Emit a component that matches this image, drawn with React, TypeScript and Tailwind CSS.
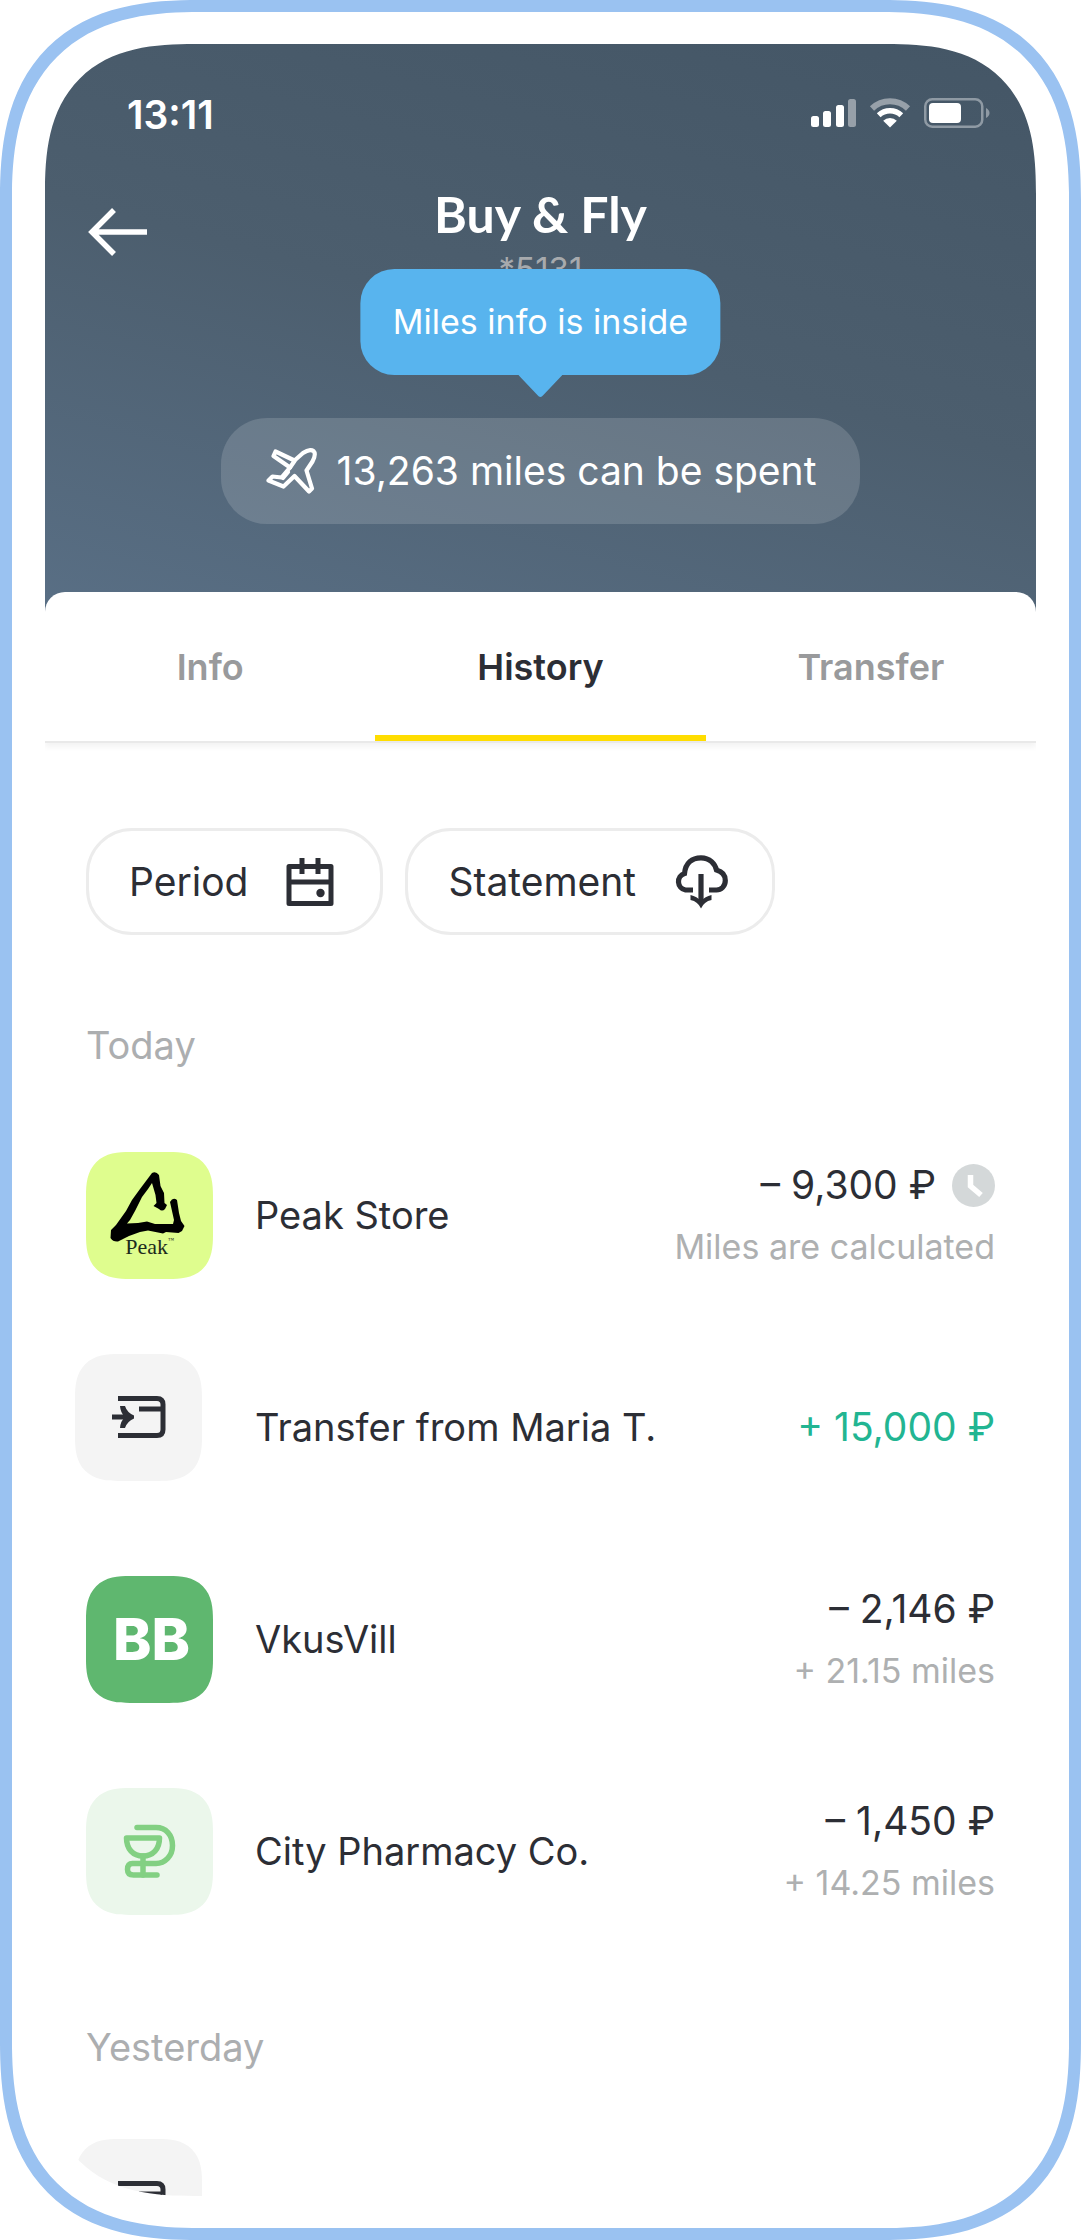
import type { ReactNode } from "react";

const squircle =
  "rounded-[30px] supports-[corner-shape:squircle]:rounded-[44px] supports-[corner-shape:squircle]:[corner-shape:superellipse(1.4)]";

function SignalIcon() {
  return (
    <svg width="45" height="30" viewBox="0 0 45 30" aria-hidden="true">
      <rect x="0" y="18" width="8" height="11" rx="2.5" fill="#fff" />
      <rect x="12" y="13" width="8" height="16" rx="2.5" fill="#fff" />
      <rect x="25" y="7" width="8" height="22" rx="2.5" fill="#fff" />
      <rect x="37" y="1" width="8" height="28" rx="2.5" fill="#97a0a9" />
    </svg>
  );
}

function WifiIcon() {
  return (
    <svg width="42" height="30" viewBox="0 0 42 30" aria-hidden="true">
      <path d="M3 10.5 A26 26 0 0 1 39 10.5" fill="none" stroke="#97a0a9" strokeWidth="6" />
      <path d="M9.7 17.2 A16.5 16.5 0 0 1 32.3 17.2" fill="none" stroke="#fff" strokeWidth="5.5" />
      <path d="M21 29.5 L14.2 22.7 A9.6 9.6 0 0 1 27.800 22.700 Z" fill="#fff" />
    </svg>
  );
}

function BatteryIcon() {
  return (
    <svg width="66" height="30" viewBox="0 0 66 30" aria-hidden="true">
      <rect x="1.25" y="1.25" width="57" height="27.5" rx="7" fill="none" stroke="#8f9aa4" strokeWidth="2.5" />
      <rect x="5" y="5" width="32" height="20" rx="4" fill="#fff" />
      <path d="M62 10 Q65.500 12 65.500 15 Q65.500 18 62 20 Z" fill="#8f9aa4" />
    </svg>
  );
}

function PlaneIcon() {
  return (
    <svg width="52" height="46" viewBox="0 0 52 46" fill="none" stroke="#fff" strokeWidth="4.2" strokeLinejoin="round" strokeLinecap="round" aria-hidden="true">
      <path d="M10.500 3.500 L29.500 12.500 L38 5 Q44.500 0.500 48.500 3 Q51.500 6 47.500 13.500 L41.500 22.500 L47 40.500 L44 43.500 L29.500 28 L18.500 38.500 L3.500 32.500 L7.500 28.500 L16.500 29.500 L25 19.500 L8.500 8 Z" />
      <path d="M25 19.500 L29.500 13" />
      <path d="M18 30 L23 24" />
    </svg>
  );
}

function CalendarIcon() {
  return (
    <svg width="48" height="48" viewBox="0 0 48 48" aria-hidden="true">
      <path d="M3 8.500 H45 V45.500 H3 Z" fill="none" stroke="#2c2e35" strokeWidth="5" strokeLinejoin="round" />
      <path d="M3 24 H45" stroke="#2c2e35" strokeWidth="5" />
      <path d="M16 0 V16 M32 0 V16" stroke="#2c2e35" strokeWidth="5" />
      <circle cx="34.5" cy="35" r="4.2" fill="#2c2e35" />
    </svg>
  );
}

function CloudDownloadIcon() {
  return (
    <svg width="54" height="54" viewBox="0 0 54 54" fill="none" stroke="#2c2e35" strokeWidth="5.2" aria-hidden="true">
      <path d="M19 35 H11.500 A8.500 8.500 0 0 1 10.500 18.500 C11.500 8 18 2.800 27 2.800 C36 2.800 41 9 42.500 15 C48 16.500 51.300 20 51.300 25.500 C51.300 31.500 47 35 42.500 35 H35" />
      <path d="M27 19 V49" />
      <path d="M16.500 40 V45 Q24 46.500 27 53.500 Q30 46.500 37.500 45 V40 Q31 41.500 27 46 Q23 41.500 16.500 40 Z" fill="#2c2e35" stroke="none" />
    </svg>
  );
}

function ClockIcon() {
  return (
    <svg width="43" height="43" viewBox="0 0 43 43" aria-label="Pending" role="img">
      <circle cx="21.5" cy="21.5" r="21.5" fill="#d4d8d9" />
      <path d="M18.500 11 V22 L29 31" fill="none" stroke="#fff" strokeWidth="5.5" />
    </svg>
  );
}

function PeakLogo() {
  return (
    <div className={`relative size-[127px] shrink-0 bg-[#dffd8e] ${squircle}`}>
      <svg className="size-full" viewBox="0 0 127 127" aria-hidden="true">
        <path d="M66 21 Q70 19 73 23 L74.500 34 L78 41 L78.500 51 L81 53 L79 57 Q76 60 73 57 L67.500 54 L70.500 51 L69.500 43 L66 31 L62 37 L56 45 L49 59 L44 68 L41 71.500 L52 71 L61 69.500 L69 72 L87 72 L88 68 L84 50 Q87 44.500 91 48 L93 61 L95 69 L98.500 74 L96 79 L92.500 81 L80 80 L77 81.500 L62 78.500 L54 80 L43 84 L32 89.500 Q27 90 24.500 86 L25 78 L30 73 L40 59 L46 48 L54 37 Z" fill="#000" />
      </svg>
      <span className="absolute inset-x-0 top-[83px] flex justify-center font-['Liberation_Serif',serif] text-[22px] leading-6 text-[#1c2a1c]">
        Peak<sup className="text-[6px] leading-4">™</sup>
      </span>
    </div>
  );
}

function TransferLogo() {
  return (
    <div className={`mb-5 -ml-[11px] mr-[11px] flex size-[127px] shrink-0 items-center justify-center bg-[#f4f4f4] ${squircle}`}>
      <svg width="54" height="44" viewBox="0 0 54 44" fill="none" stroke="#2c2e35" strokeWidth="5" aria-hidden="true">
        <path d="M6 3.500 H45 Q51 3.500 51 9.500 V34.500 Q51 40.500 45 40.500 H6" />
        <path d="M27 14 H50" />
        <path d="M0 22 H19" />
        <path d="M8 11 H13 Q15 17.500 22 20.500 V23.500 Q15 26.500 13 33 H8 Q8.500 26 13 22 Q8.500 18 8 11 Z" fill="#2c2e35" stroke="none" />
      </svg>
    </div>
  );
}

function VkusVillLogo() {
  return (
    <div className={`flex size-[127px] shrink-0 items-center justify-center bg-[#5fb76f] pl-1 text-[58px] font-extrabold leading-none text-white ${squircle}`}>
      BB
    </div>
  );
}

function PharmacyLogo() {
  return (
    <div className={`flex size-[127px] shrink-0 items-center justify-center bg-[#ebf7eb] ${squircle}`}>
      <svg width="53" height="54" viewBox="0 0 53 54" fill="none" stroke="#82d082" strokeWidth="5.5" strokeLinecap="round" strokeLinejoin="round" aria-hidden="true">
        <path d="M14 3.500 H33 C43 3.500 49.500 11 49.500 21.500 C49.500 32 42 39.500 33 39.500 H9.500 Q4.500 39.500 4.500 45.500 Q4.500 51 10.500 51 H34" />
        <path d="M3.500 14 H36.500 C36.500 25 30 32 20 32 C10 32 3.500 25 3.500 14 Z" />
        <path d="M20 32 V51" />
      </svg>
    </div>
  );
}

type Entry = {
  name: string;
  amount: string;
  note?: string;
  income?: boolean;
  pending?: boolean;
  logo: ReactNode;
};

const today: Entry[] = [
  { name: "Peak Store", amount: "– 9,300 ₽", note: "Miles are calculated", pending: true, logo: <PeakLogo /> },
  { name: "Transfer from Maria T.", amount: "+ 15,000 ₽", income: true, logo: <TransferLogo /> },
  { name: "VkusVill", amount: "– 2,146 ₽", note: "+ 21.15 miles", logo: <VkusVillLogo /> },
  { name: "City Pharmacy Co.", amount: "– 1,450 ₽", note: "+ 14.25 miles", logo: <PharmacyLogo /> },
];

function EntryRow({ entry }: { entry: Entry }) {
  return (
    <li className="flex h-[148px] items-center">
      {entry.logo}
      <span className="ml-[42px] flex-1 whitespace-nowrap text-[38px] leading-[48px] text-[#2c2e35]">{entry.name}</span>
      <span className="flex flex-col items-end gap-4">
        <span className="flex items-center gap-4">
          <span className={`whitespace-nowrap text-[39px] leading-[48px] ${entry.income ? "text-[#22b592]" : "text-[#2c2e35]"}`}>
            {entry.amount}
          </span>
          {entry.pending && <ClockIcon />}
        </span>
        {entry.note && <span className="whitespace-nowrap text-[34px] leading-[44px] text-[#aeb0b1]">{entry.note}</span>}
      </span>
    </li>
  );
}

function Day({ title, children }: { title: string; children: ReactNode }) {
  return (
    <section>
      <h2 className="text-[38px] leading-[48px] text-[#acaeb0]">{title}</h2>
      <ul className="mt-[72px] flex flex-col gap-16">{children}</ul>
    </section>
  );
}

const tabs = ["Info", "History", "Transfer"];

export default function App() {
  return (
    <div className="h-screen w-full bg-white font-['Inter',sans-serif]">
      <div className="h-full rounded-[160px] border-12 border-[#9ac2f1] bg-white px-[33px] py-8 supports-[corner-shape:squircle]:rounded-[200px] supports-[corner-shape:squircle]:[corner-shape:superellipse(1.35)]">
        <main className="flex h-full flex-col overflow-hidden rounded-[122px] bg-white supports-[corner-shape:squircle]:rounded-[150px] supports-[corner-shape:squircle]:[corner-shape:superellipse(1.4)]">
          <header className="bg-linear-[195deg] from-[#445666] via-[#4c5e6e] to-[#596f85] pb-[88px] pt-11 text-white">
            <div className="flex items-center justify-between pl-[82px] pr-[46px]">
              <time className="text-[39px] font-semibold leading-[54px]">13:11</time>
              <div className="mb-1 flex items-center gap-[13px]">
                <SignalIcon />
                <WifiIcon />
                <BatteryIcon />
              </div>
            </div>

            <div className="mt-[42px] grid grid-cols-[1fr_auto_1fr] items-start px-[43px]">
              <button type="button" aria-label="Back" className="mt-6 w-fit">
                <svg width="59" height="48" viewBox="0 0 59 48" fill="none" stroke="#fff" strokeWidth="5.5" aria-hidden="true">
                  <path d="M26 2 L4 24 L26 46 M4 24 H59" />
                </svg>
              </button>
              <div className="text-center">
                <h1 className="font-['Lato',sans-serif] text-[50px] font-bold leading-[60px]">Buy &amp; Fly</h1>
                <p className="mt-[3px] text-[33px] leading-[44px] text-[#a7aaad]">*5131</p>
              </div>
            </div>

            <div className="relative mx-auto mt-[127px] w-fit">
              <div role="tooltip" className="absolute bottom-[149px] left-1/2 -translate-x-1/2 whitespace-nowrap rounded-[34px] bg-[#58b4ee] px-8 py-[31px] text-[34px] leading-[44px]">
                Miles info is inside
                <svg className="absolute left-1/2 top-full -translate-x-1/2" width="44" height="23" viewBox="0 0 44 23" aria-hidden="true">
                  <path d="M0 0 H44 L25 20 Q22 24 19 20 Z" fill="#58b4ee" />
                </svg>
              </div>
              <button type="button" className="flex items-center gap-5 rounded-[46px] bg-white/15 px-11 py-[29px] text-[39px] leading-[48px]">
                <PlaneIcon />
                13,263 miles can be spent
              </button>
            </div>
          </header>

          <div className="-mt-5 flex-1 rounded-t-[20px] bg-white">
            <nav role="tablist" className="grid grid-cols-3 border-b-2 border-[#e9e9e9] shadow-[0_4px_6px_rgba(0,0,0,0.05)]">
              {tabs.map((tab) => (
                <button
                  key={tab}
                  type="button"
                  role="tab"
                  aria-selected={tab === "History"}
                  className="border-b-[6px] border-transparent pb-11 pt-[51px] text-[36px] font-semibold leading-[48px] text-[#999a9c] aria-selected:border-[#ffdd00] aria-selected:text-[#2c2e35]"
                >
                  {tab}
                </button>
              ))}
            </nav>

            <div className="px-[41px] pt-[85px]">
              <div className="flex gap-[22px]">
                <button type="button" className="flex h-[107px] items-center gap-[38px] rounded-[46px] border-3 border-[#ececec] pl-10 pr-[46px] text-[39px] leading-[48px] text-[#2c2e35]">
                  Period
                  <CalendarIcon />
                </button>
                <button type="button" className="flex h-[107px] items-center gap-[38px] rounded-[46px] border-3 border-[#ececec] pl-10 pr-11 text-[39px] leading-[48px] text-[#2c2e35]">
                  Statement
                  <CloudDownloadIcon />
                </button>
              </div>

              <div className="mt-[86px] flex flex-col gap-[98px]">
                <Day title="Today">
                  {today.map((entry) => (
                    <EntryRow key={entry.name} entry={entry} />
                  ))}
                </Day>
                <Day title="Yesterday">
                  <li className="flex h-[138px] items-center" aria-label="Transfer">
                    <TransferLogo />
                  </li>
                </Day>
              </div>
            </div>
          </div>
        </main>
      </div>
    </div>
  );
}
